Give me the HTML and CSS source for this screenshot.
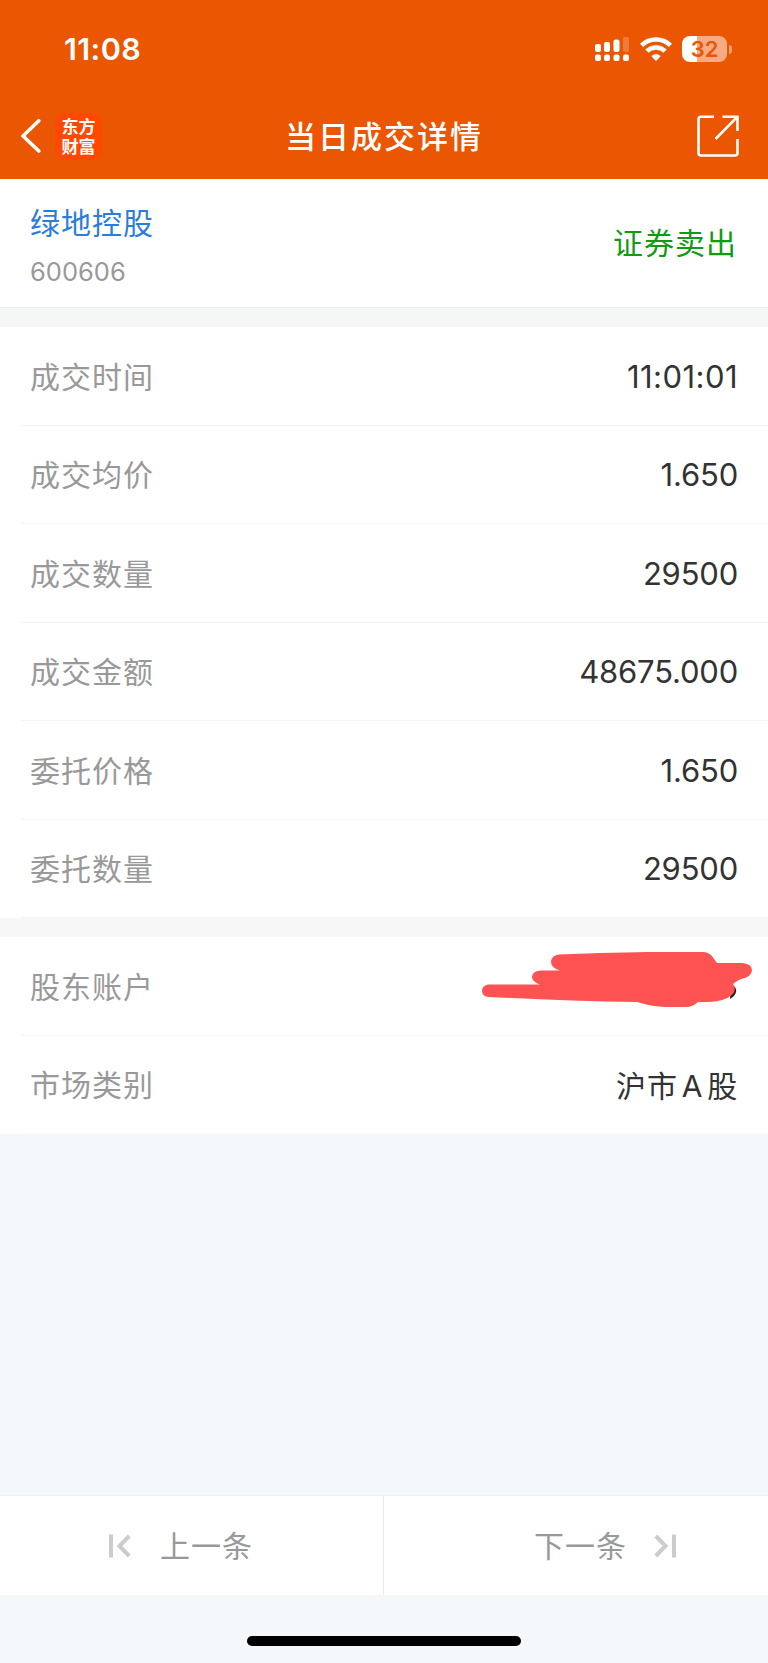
FILE: index.html
```html
<!DOCTYPE html>
<html lang="zh-CN">
<head>
<meta charset="utf-8">
<title>当日成交详情</title>
<link rel="stylesheet" href="styles.css">
</head>
<body>
<div class="screen">
  <header class="header">
    <div class="status">
      <span class="clock">11:08</span>
      <div class="status-icons">
        <svg class="signal" width="34" height="24" viewBox="0 0 34 24" fill="#fff">
          <rect x="0" y="7" width="6" height="8" rx="2"/><rect x="9" y="5" width="6" height="10" rx="2"/><rect x="18.500" y="2.500" width="6" height="12.500" rx="2"/><rect x="28" y="0" width="6" height="15" rx="2" opacity=".22"/>
          <rect x="0" y="17.500" width="6" height="6.500" rx="2"/><rect x="9" y="17.500" width="6" height="6.500" rx="2"/><rect x="18.500" y="17.500" width="6" height="6.500" rx="2"/><rect x="28" y="17.500" width="6" height="6.500" rx="2"/>
        </svg>
        <svg class="wifi" width="32" height="24" viewBox="0 0 32 24" fill="none" stroke="#fff" stroke-width="4.600">
          <path d="M1.600 8.300C9.600 .5 22.400 .5 30.400 8.300"/><path d="M6.900 14.200C12 9.300 20 9.300 25.100 14.200"/><path d="M16 24l-4.700-4.800c2.600-2.500 6.800-2.500 9.400 0z" fill="#fff" stroke="none"/>
        </svg>
        <div class="battery"><span class="battery-body">32</span><span class="battery-cap"></span></div>
      </div>
    </div>
    <div class="nav">
      <div class="nav-side">
        <svg width="20" height="34" viewBox="0 0 20 34" fill="none" stroke="#fff" stroke-width="3.600" stroke-linecap="round"><path d="M17.800 1.800L2 17L17.800 32"/></svg>
        <div class="logo">东方<br>财富</div>
      </div>
      <h1 class="title">当日成交详情</h1>
      <div class="nav-side nav-right">
        <svg width="42" height="42" viewBox="0 0 42 42" fill="none" stroke="#fff" stroke-width="2.600" stroke-linecap="butt"><path d="M17 1.800H4Q1.500 1.800 1.500 4.500V38Q1.500 40.500 4 40.500H38Q40.500 40.500 40.500 38V24"/><path d="M25.500 1.800H40.500V16M40 2.200L18.500 24"/></svg>
      </div>
    </div>
  </header>
  <section class="stock">
    <div><div class="stock-name">绿地控股</div><div class="stock-code">600606</div></div>
    <div class="side">证券卖出</div>
  </section>
  <section class="group">
    <div class="row"><span class="label">成交时间</span><span class="num time">11:01:01</span></div>
    <div class="row"><span class="label">成交均价</span><span class="num">1.650</span></div>
    <div class="row"><span class="label">成交数量</span><span class="num">29500</span></div>
    <div class="row"><span class="label">成交金额</span><span class="num">48675.000</span></div>
    <div class="row"><span class="label">委托价格</span><span class="num">1.650</span></div>
    <div class="row"><span class="label">委托数量</span><span class="num">29500</span></div>
  </section>
  <section class="group account">
    <div class="row"><span class="label">股东账户</span>
      <svg class="scribble" width="271" height="56" viewBox="0 0 271 56"><path d="M249 32q6 3 5 8q-1 4-6 7" fill="#222"/><path d="M6 32.500H58C51 30 50 27 50 24.500Q51 18.500 59 18.500H78Q69 16 69 9.500Q70 3 77 2.500C115 1 150 0 175 0H222Q229 1 232 7L235 11H260Q270 12 270 18Q270 23 263 26Q257 27 251 32Q255 38 250 43Q241 50 226 50H216Q211 55 204 55H190C175 55 165 53 155 50C105 50 55 47 6 45Q0 44 0 38.500Q0 34 6 32.500Z" fill="#ff5253"/></svg>
    </div>
    <div class="row"><span class="label">市场类别</span><span class="market">沪市<span class="latin">A</span>股</span></div>
  </section>
  <footer class="footer">
    <div class="pager">
      <div class="page prev">
        <svg width="22" height="24" viewBox="0 0 22 24" fill="none" stroke="#ccc" stroke-width="4"><path d="M2 .5V23.500M20.300 2L10.500 12L20.300 22"/></svg>
        <span class="page-text">上一条</span>
      </div>
      <div class="page next">
        <span class="page-text">下一条</span>
        <svg width="22" height="24" viewBox="0 0 22 24" fill="none" stroke="#ccc" stroke-width="4"><path d="M20 .5V23.500M1.700 2L11.500 12L1.700 22"/></svg>
      </div>
    </div>
    <div class="home"></div>
  </footer>
</div>
</body>
</html>
```
FILE: styles.css
```css
* { box-sizing: border-box; }
body { margin: 0; background: #f4f8fa; font-family: "Noto Sans CJK SC", sans-serif; }
.screen { width: 768px; height: 1663px; display: flex; flex-direction: column; overflow: hidden; }
svg { display: block; flex: none; }
.header { height: 179px; background: #ea5602; color: #fff; flex: none; }
.status { height: 98px; padding: 0 36px 0 64px; display: flex; justify-content: space-between; align-items: center; }
.clock { font: 600 30.5px/36px Inter, sans-serif; letter-spacing: .4px; }
.status-icons { display: flex; align-items: center; }
.wifi { margin-left: 11px; }
.battery { display: flex; align-items: center; margin-left: 10px; }
.battery-body { width: 45px; height: 26px; border-radius: 8px; background: linear-gradient(90deg, #fff 15px, #f6ab82 15px); color: #ea5602; font: 600 22px/26px Inter, sans-serif; text-align: center; }
.battery-cap { width: 3px; height: 9px; margin-left: 2px; border-radius: 0 3px 3px 0; background: #f4a075; }
.nav { height: 76px; padding: 0 29px 0 21px; display: flex; align-items: center; justify-content: space-between; }
.nav-side { width: 120px; display: flex; align-items: center; gap: 14px; }
.nav-right { justify-content: flex-end; }
.logo { width: 47px; height: 47px; padding-top: 3px; border-radius: 9px; background: #ff4800; text-align: center; font: 700 17px/20px "Noto Sans CJK SC", sans-serif; }
.title { margin: 0; padding: 0 0 2px 8px; font-size: 31px; font-weight: 500; line-height: 40px; letter-spacing: 2px; }
.stock { height: 129px; padding: 0 31px 0 30px; background: #fff; border-bottom: 1px solid #eceeee; display: flex; justify-content: space-between; align-items: center; flex: none; }
.stock-name { padding-top: 3px; font-size: 30px; line-height: 44px; letter-spacing: 1px; color: #2b7ddb; }
.stock-code { margin-top: 10px; font: 400 25.5px/38px Inter, sans-serif; color: #999; }
.side { padding-bottom: 5px; font-size: 30px; letter-spacing: 1px; color: #109b10; }
.group { padding-left: 21px; background: #fff; flex: none; border-top: 19px solid #f5f7f7; }
.account { border-top-color: #f7f7f7; }
.row { height: 98.5px; padding: 0 30px 0 9px; display: flex; align-items: center; justify-content: space-between; border-bottom: 1px solid #f3f4f4; }
.account .row:last-child { border-bottom-color: #fafbfb; }
.label { padding-bottom: 2px; font-size: 30px; letter-spacing: 1px; color: #999; }
.num { padding-top: 2px; font: 400 31px/40px Inter, sans-serif; letter-spacing: -.2px; color: #333; }
.time { letter-spacing: .45px; }
.market { padding-bottom: 1px; font-size: 30px; letter-spacing: .8px; color: #333; }
.latin { font-family: Inter, sans-serif; margin: 0 4px; }
.scribble { margin-right: -15px; margin-top: -11px; }
.footer { margin-top: auto; height: 168px; flex: none; }
.pager { height: 100px; display: grid; grid-template-columns: 384px 384px; background: #fff; border-top: 1px solid #eef1f2; }
.page { display: flex; align-items: center; gap: 29px; font-size: 30px; letter-spacing: 1px; color: #999; }
.page-text { padding-bottom: 4px; }
.prev { padding-left: 109px; border-right: 1px solid #e8ebee; }
.next { padding-left: 150px; gap: 27px; }
.home { width: 274px; height: 10px; border-radius: 5px; background: #000; margin: 41px auto 0; }
```
